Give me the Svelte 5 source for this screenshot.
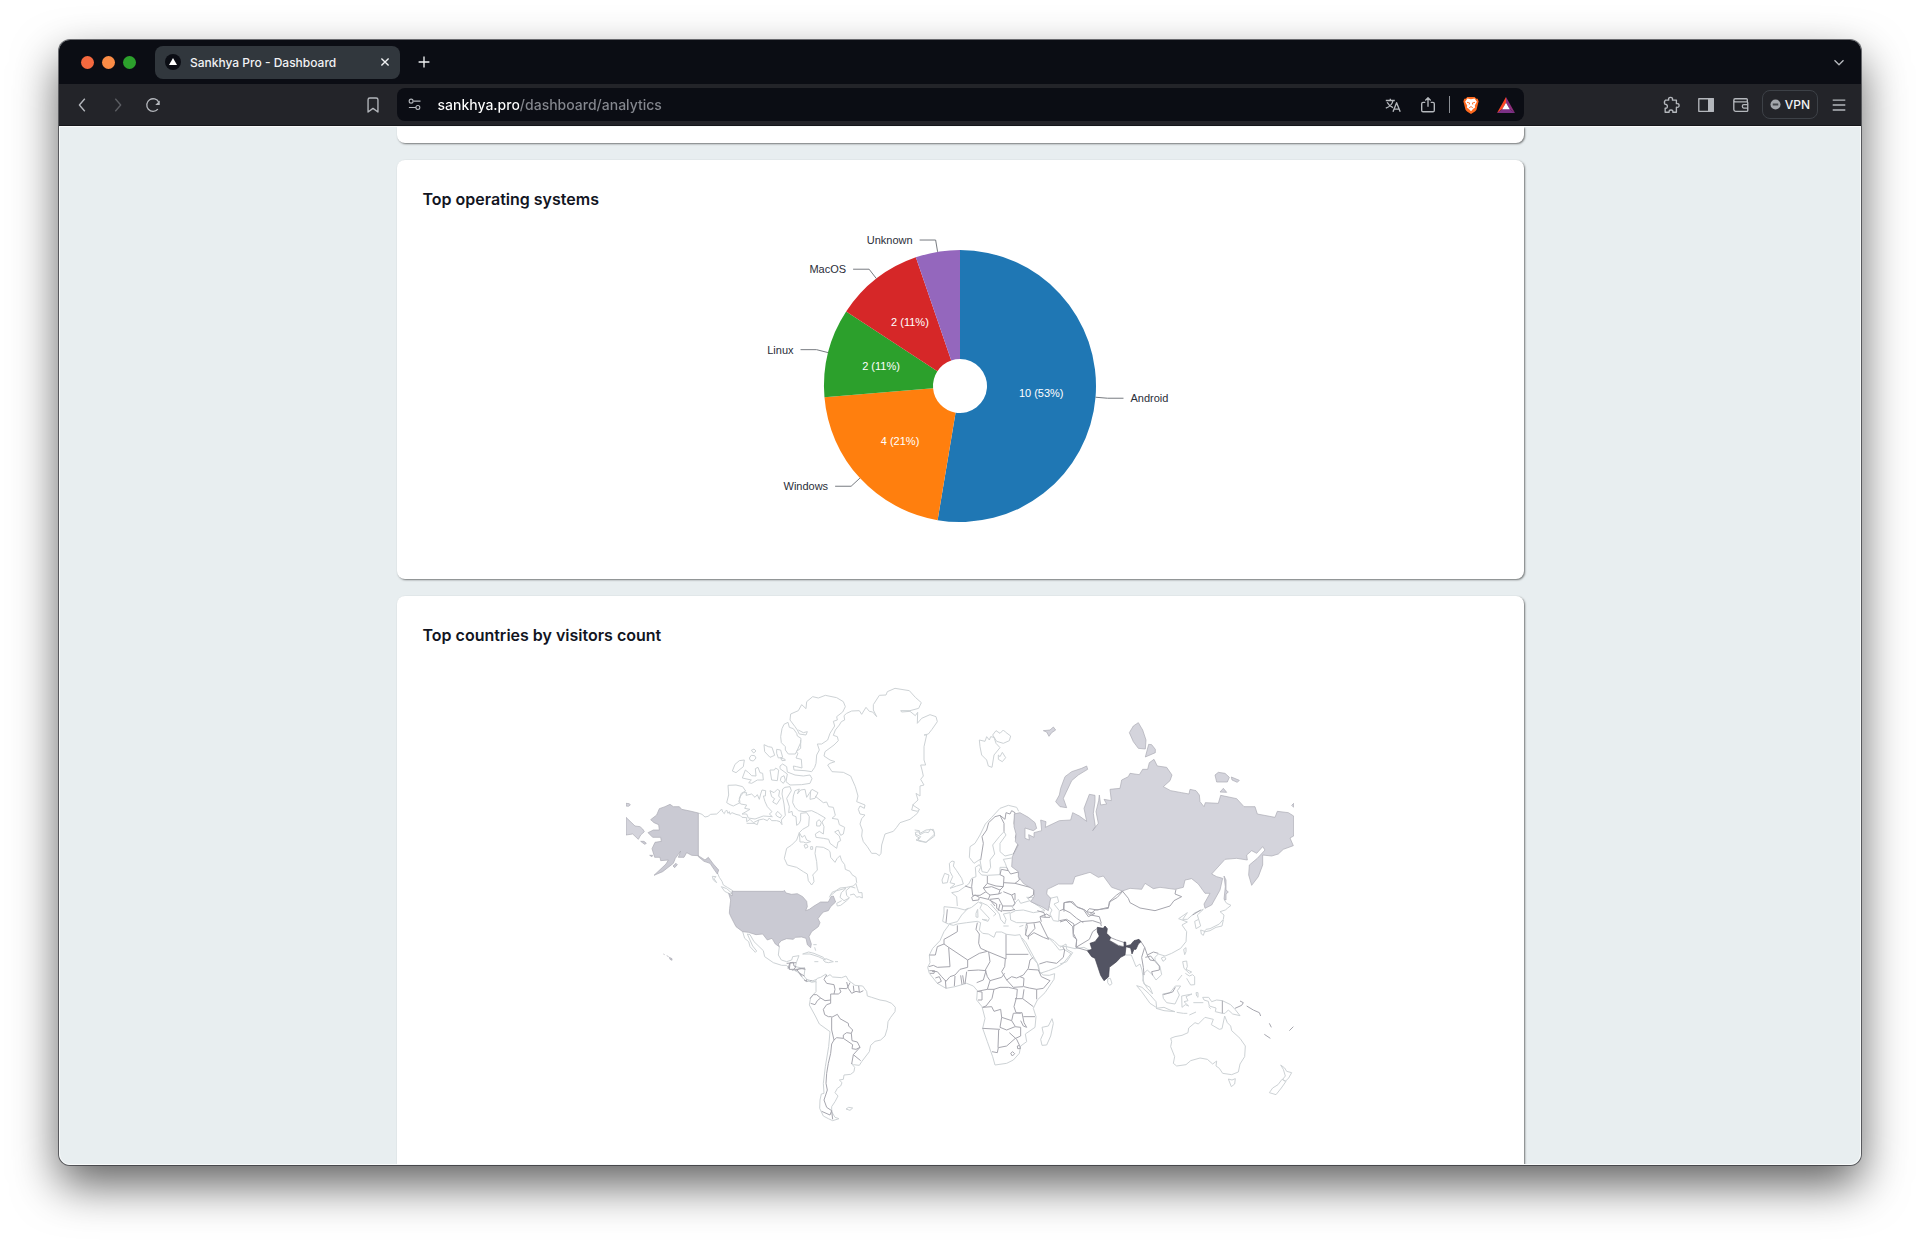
<!--
  Analytics dashboard shown inside a desktop browser window:
  tab strip, toolbar, and the scrolled card column below it.
-->
<script lang="ts">
  type Slice = {
    name: string;
    count: number;
    color: string;
  };

  type Region = {
    name: string;
    /// Offset of the region's own grid on the map sheet.
    x: number;
    y: number;
    coast: string;
    border?: string;
  };

  const OUTER = 136;
  const INNER = 27;

  const systems: Slice[] = [
    { name: "Android", count: 10, color: "#1f77b4" },
    { name: "Windows", count: 4, color: "#ff7f0e" },
    { name: "Linux", count: 2, color: "#2ca02c" },
    { name: "MacOS", count: 2, color: "#d62728" },
    { name: "Unknown", count: 1, color: "#9467bd" },
  ];

  const total = systems.reduce((sum, s) => sum + s.count, 0);

  function polar(radius: number, angle: number): [number, number] {
    return [radius * Math.sin(angle), -radius * Math.cos(angle)];
  }

  // Start angle of each slice is the running total of the ones before it.
  const slices = systems.map((s, i) => {
    const before = systems.slice(0, i).reduce((sum, p) => sum + p.count, 0);
    const a0 = (before / total) * Math.PI * 2;
    const a1 = ((before + s.count) / total) * Math.PI * 2;
    const mid = (a0 + a1) / 2;
    const large = a1 - a0 > Math.PI ? 1 : 0;
    const [x0, y0] = polar(OUTER, a0);
    const [x1, y1] = polar(OUTER, a1);
    const [x2, y2] = polar(INNER, a1);
    const [x3, y3] = polar(INNER, a0);
    const [ex, ey] = polar(OUTER, mid);
    const [kx, ky] = polar(OUTER + 12, mid);
    const [lx, ly] = polar((OUTER + INNER) / 2, mid);
    const side = mid < Math.PI ? 1 : -1;
    return {
      ...s,
      side,
      d: `M${x0} ${y0}A${OUTER} ${OUTER} 0 ${large} 1 ${x1} ${y1}L${x2} ${y2}A${INNER} ${INNER} 0 ${large} 0 ${x3} ${y3}Z`,
      link: `M${ex} ${ey}L${kx} ${ky}h${side * 16}`,
      tx: kx + side * 23,
      ty: ky,
      lx,
      ly,
      // Slices under 6% have no room for a value.
      value:
        s.count / total > 0.06
          ? `${s.count} (${Math.round((s.count / total) * 100)}%)`
          : null,
    };
  });

  const regions: Region[] = [
    {
      name: "Canada and Greenland",
      x: 162,
      y: 0,
      coast:
        "M55 429L66 433 75 441 84 439 92 433 110 432 118 425 125 417 128 426 133 431 136 424 140 420 144 430 148 425 150 433 156 428 168 433 180 436 186 442 200 443 200 455 210 448 220 458 236 450 232 464 222 460 200 460M236 450L250 447 262 452 268 444 275 452 290 452 300 455 306 464 304 450 316 436 312 402 306 372 308 357 315 352 330 350 334 362 320 385 328 410 326 428 336 424 338 436 348 440 350 466 358 460 362 450 362 430 380 428 388 440 386 468 368 478 358 488 350 510 335 525 320 535 313 565 322 585 350 592 370 605 382 612 385 632 395 645 402 635 400 620 398 615 412 600 410 575 405 550 408 530 430 532 445 540 450 545 452 562 465 577 471 566 480 557 485 572 494 584 496 598 510 604 516 614 528 622 530 638 520 648 500 652 480 654 468 662 456 667 448 682M450 678L470 662 498 655 484 668 480 682 492 692 508 684 500 676 498 662 512 650 526 654M528 642L532 655 536 668 546 668 547 684 538 680 530 682 522 672 510 675M508 684L500 692 482 706 472 708 470 700 485 692" +
        "M112 608L118 622 126 634 130 645 142 652 158 662 155 672M124 650L140 656 156 670 150 672 134 664ZM97 619L108 620 102 626 110 638 100 630Z" +
        "M340 378L345 362 358 357 352 372 362 360 375 358 380 382 388 370 396 358 414 368 405 385 390 388 392 362M405 378L430 398 440 396 446 410 460 412 466 436 456 445 474 448 478 464 494 472 490 492 482 496 475 480 464 486 478 498 482 512 474 516 470 535 450 520 446 508 430 505 408 502 406 492 418 484 430 492 432 470 426 456 436 444 412 430 395 422 372 425 355 422 345 412 338 398 340 378" +
        "M410 455L418 449 424 458 420 468 410 468ZM358 488L366 502 374 496 380 510 392 515 378 519 370 516 360 516ZM372 525L380 523 384 531 376 535ZM392 530H398V538H392Z" +
        "M144 346L168 345 188 350 197 363 184 370 178 385 180 398 160 408 150 404 140 398 146 375Z" +
        "M176 395L182 378 190 368 200 368 198 376 215 372 225 382 232 374 238 388 242 372 246 360 257 362 256 378 250 378 255 395 262 410 276 425 268 432 277 440 250 438 225 447 205 444 200 432 186 432 210 418 194 415 200 405 182 402Z" +
        "M270 362L282 368 292 358 299 362 296 378 302 385 290 403 278 396 284 386 275 380ZM287 432L293 424 305 436 301 444 290 438Z" +
        "M157 303L165 283 178 272 193 270 190 290 180 298 168 308ZM196 300L206 308 215 317 228 318 226 296 234 292 240 308 248 310 250 330 232 330 215 340 206 338 214 330 187 324ZM270 300L283 300 287 294 296 300 292 332 275 330ZM303 322L312 317 316 330 310 340 301 332ZM300 288L308 282 320 290 322 306 345 315 370 318 390 315 396 326 390 340 365 344 330 345 318 335 322 312 300 296Z" +
        "M252 224L265 230 276 232 284 256 270 262 254 245ZM290 238L302 240 308 262 295 264 290 250ZM302 265L314 267 316 271 306 272ZM208 264L214 256 224 257 228 264 220 273 211 271ZM214 241L222 237 228 243 221 249Z" +
        "M302 200L306 176 312 163 324 157 328 172 340 176 350 190 352 198 363 205 362 218 352 240 346 252 325 252 316 240 316 230 304 218Z" +
        "M355 180L370 188 382 185 378 195 358 192 352 180 345 170 330 150 332 132 355 122 365 104 378 116 380 95 398 80 415 84 436 76 470 83 490 95 496 110 488 126 470 140 472 150 460 154 464 168 450 190 443 210 425 222 412 222 418 240 410 255 408 280 404 292 395 305 375 302 342 300 340 288 350 290 366 294 364 268 348 264 354 250 348 245 362 235 362 210" +
        "M492 137L500 130 515 123 538 122 545 133 558 112 568 124 578 126 590 140 580 120 580 104 598 76 618 75 622 65 645 55 688 62 706 82 724 98 716 115 690 122 662 122 665 126 690 124 706 137 713 127 712 160 725 145 750 134 768 140 772 155 756 178 745 192 732 195 740 195 732 230 732 270 737 285 722 285 726 300 730 318 722 328 732 345 720 348 720 378 708 370 714 390 698 405 718 418 712 424 695 420 700 402M718 418L712 430 700 440 690 448 660 458 650 472 640 484 615 492 605 525 603 550 598 557 588 550 575 550 562 530 550 515 545 498 547 480 540 462 545 446 555 435 540 432 535 418 540 408 553 415 555 405 530 395 534 378 526 350 512 318 490 307 456 305 443 285 450 280 465 275 450 270 432 258 435 245 462 225 475 212 472 200 460 196 466 180 478 165 484 155 494 150 492 137" +
        "M706 487L716 485 720 494 735 486 745 488 752 477 762 485 764 498 738 517 720 514 708 510 718 504 708 498Z",
    },
    {
      name: "Mexico and the Caribbean",
      x: -48,
      y: 330,
      coast:
        "M398 455L404 475 416 485 420 500 436 517 440 513 428 498 412 462 420 464 432 485 460 512 464 530 490 548 515 556 530 556 538 568 552 570 566 578 576 592 590 605 604 602 620 606M508 500L505 525 514 540 530 545 545 540 548 530 567 527 560 545 556 560 585 566 582 588 590 598 606 603 620 598M578 522L596 516 612 520 640 532 646 540 625 530 600 522ZM640 540L648 536 658 540 670 545 655 548 645 546ZM613 545H625M675 545H684M610 494L620 494M614 502L617 512",
      border:
        "M534 566L540 548 550 547 552 558 558 560 548 572M556 572L568 566 585 564M566 578L583 588M590 598L588 605M604 600L600 606",
    },
    {
      name: "South America",
      x: 462,
      y: 750,
      coast:
        "M82 180L95 187 105 185 112 175 122 172 138 162 140 170 150 164 158 171 185 173 198 168 206 182 215 188 225 196 248 198 260 214 262 228 275 232 300 240 318 243 335 250 346 262 345 275 332 292 324 305 322 325 315 348 302 360 285 364 272 376 268 395 245 425 238 436 220 434 214 430 224 442 222 455 212 463 192 465 190 478 178 480 186 488 182 498 172 505 165 518 174 528 165 545 155 560 155 575 165 592 177 596 158 602 145 596 130 588 119 565 120 540 124 522 132 520 130 490 136 440 146 380 150 335 118 312 106 288 88 255 92 232 108 215 108 185M198 567L206 562 218 564 210 571Z",
      border:
        "M140 165L132 178 140 190 162 194 165 208 162 222 175 222 183 216 178 205 200 206 205 198 210 188M200 186L205 205 215 220 228 214 240 217 250 212M222 215L220 197M238 216L236 198M162 222L152 222 152 250 140 254 130 268 134 284 145 290 155 290M90 236L100 224 110 224 122 234 112 242 105 254 92 250M122 234L135 242 152 240M155 292L172 283 180 296 205 310 206 318 218 330 214 340 200 338 190 345 190 355 170 353 162 360 155 330ZM162 360L155 372 152 400 145 430 140 460 138 490 142 510 132 540 140 562 155 572 158 598M125 574L150 585 155 572M214 340L216 362 232 366 240 382 228 388 216 386 218 374 190 355M240 382L220 404 242 422M220 404L215 432M20 130L48 128M30 130L28 148 50 148 66 146 76 148M50 148L66 170M72 180L82 184",
    },
    {
      name: "Europe, Africa and Arabia",
      x: 822,
      y: 330,
      coast:
        "M148 433L160 436 172 432 200 428 232 424 242 428 238 450 248 460 265 462 282 472 288 456 305 456 320 463 345 466 360 464 366 478 395 530 412 550 418 575 430 585 448 586 464 581 462 598 435 638 412 660 400 685 408 710 405 742 376 762 380 785 362 798 358 820 340 840 320 850 285 855 278 830 262 785 248 745 255 715 246 680 230 660 232 632 220 618 200 610 165 620 138 625 112 610 88 580 83 562 90 548 88 525 98 505 120 482 132 455ZM456 716L460 730 452 768 440 795 426 796 422 778 430 760 426 742 445 738Z" +
        "M366 474L378 488 398 525 415 555 420 580 445 572 470 562 490 550 513 521 492 508 478 510 462 490 444 472 462 482 478 498 500 500 525 506 552 502 570 512" +
        "M450 355L472 350 476 366 462 372 478 392 476 424 460 422 450 402 456 390 444 375ZM340 375L355 358 362 370 390 362 380 352 400 352M390 362L415 378 435 392 400 398 370 390 345 392 336 380M330 400L345 393M330 400L332 420 350 428 380 428 376 445 378 466M310 438H326M358 440L370 436" +
        "M132 380L172 384 195 390 205 384 185 405 172 425 145 432 128 424 132 400ZM195 390L215 382 235 366 246 372 240 385 268 415 264 424 246 418 262 420M240 366L262 376 288 402 280 408M272 372L298 402 302 418 314 432 318 418 310 402 330 398M228 400L233 388 234 412 228 411ZM172 378L170 350 155 338 175 334 192 322 206 312 215 295 228 290 226 262 238 254 242 262 236 275 245 285 262 286 300 284 300 262 320 262 316 250 310 238 335 234" +
        "M148 250L156 243 163 245 160 258 170 272 185 295 190 312 170 318 150 325 165 312 150 308 158 290 150 275ZM126 300L134 280 147 285 142 308 128 310Z" +
        "M210 200L225 190 240 165 256 132 275 112 300 85 325 76 350 82 356 94M210 200L208 232 222 250 240 238M240 240L246 275 262 278 272 262 270 240 284 222 278 195 298 170 312 155 318 165 300 190 300 215 315 228 340 222M44 150L58 152 60 160 78 150 100 148 104 162 78 187 54 180 62 170 46 162",
      border:
        "M242 240L250 190 246 170 260 150 266 128 285 110 300 106 315 118 318 98 330 102 335 92 345 98 342 130 350 160 346 172 355 190 340 222M300 106L312 130 312 155" +
        "M262 288L262 310 250 324 258 335 240 346 218 346 215 320 218 296M262 310L288 318 310 320 312 290 300 284 304 268 325 272 332 282 355 276 358 300 345 310 312 308M325 272L320 262M195 318L214 324M215 352L225 345 238 352 236 360 218 362ZM250 324L275 320 300 330 310 320M300 330L296 342 270 345 258 336M270 345L265 358 240 352M310 335L335 345 345 370 340 378 308 378 296 355 270 358M296 342L305 338M265 358L290 372 290 385 305 395 308 378M272 362L285 378M300 372L295 392M308 392L330 392 345 388M345 310L375 318 402 325 400 345 385 355M335 345L345 340 345 360M142 388L138 428" +
        "M172 436L172 455 150 468 132 478 132 492 112 500 106 525 88 525M132 492L146 502 150 560 112 562 100 556 86 560M146 502L203 540 238 520 262 514 242 505 236 490 238 462 228 448 232 428M262 514L318 537V463M318 523H385M316 537L314 560 305 575 320 600 335 590 350 594 370 585 385 565 390 540 400 532M266 516L270 545 256 570 262 590 270 602 305 592 314 580M203 540L203 562 180 568 165 585 150 590 138 604 125 590 112 575 96 574M203 572L235 570 258 572 250 600 230 608M200 575L195 612M165 588L163 618M182 586L186 614M188 586L192 612M136 600L138 625M88 572L104 572 102 580 90 580M106 594L118 590 124 604 112 610M270 602L262 628 232 634 246 636 246 660 234 660M262 628L282 628 276 655 258 678 248 682M282 628L300 622 325 622 352 628 350 650 342 680 348 698 362 700M320 600L340 622 370 620 372 595 360 590M385 568L415 570 424 590 450 602 430 625 410 628 388 624 372 620M410 628L410 658M372 628L368 656 345 656M368 656L400 680M248 682L275 680 282 694 302 688 305 712 335 722 340 700 366 698 372 728 380 742 370 738 362 722M305 712L300 742 320 750 345 740 362 742 362 768 345 776 320 798 295 803 292 818 276 815M247 745L300 748M296 750L294 803M335 722L345 738M370 710L405 710M328 758L350 778 358 795M332 820L338 815 344 821 337 828ZM352 798L359 796 361 806 353 806Z" +
        "M385 470L402 458 430 472 446 478M385 478L385 470 376 465 382 440 380 432M380 430L405 428 420 425 432 450 446 478M402 430L405 445 384 468M418 552L440 545 470 550 490 532 494 510 488 500M412 392L432 398 436 412 420 410 424 425M420 410L440 402 452 410M436 412L450 412M478 422L500 418 522 432 520 460 530 480 528 502",
    },
    {
      name: "Svalbard and Central Asia",
      x: 1032,
      y: 30,
      coast:
        "M28 180L45 184 50 170 58 180 62 170 72 172 78 190 90 203 72 225 66 262 55 258 50 240 35 225 30 200ZM68 165L78 152 90 160 100 150 106 156 122 168 118 182 100 190 80 184ZM85 225L90 230 97 217 107 233 97 245 85 238Z",
      border:
        "M282 695L282 668 300 664 320 680 345 690 358 705 375 690 415 685 418 665 440 645 457 633 475 655 480 668 510 684 555 692 600 678 612 662 635 650 615 642 618 628",
    },
    {
      name: "Asia and Oceania",
      x: 1302,
      y: 570,
      coast:
        "M143 357L151 355 156 371 149 376 143 368ZM0 262L18 252 20 268 38 278 20 305 0 312M430 148L405 158 382 178 368 178 382 158 356 176 382 186 366 195 380 215 378 245 362 265 335 280 315 288 295 282 285 292M430 148L412 165 416 178 404 184 408 206 422 198 416 178M304 294L313 290 318 297 309 304ZM371 268L378 263 378 275 374 284ZM195 285L214 285 228 320 240 312 246 330 252 372 270 382 278 402 262 385 248 362 252 340 262 330 278 345 288 360 305 344 300 320 285 300 285 292" +
        "M493 120L500 130 513 136 502 145 496 150 480 155 492 165 490 178 478 192 450 206 438 208 432 216 450 212 468 202 486 198 490 180M422 210L434 214 430 226 424 222ZM368 305L380 303 382 320 378 328 395 336 388 340 372 325ZM376 340L388 348 398 344 404 350 404 374 392 375 384 362 380 355M353 362L366 345M308 402L330 398 346 378 362 378 352 392 358 405 345 432 320 428 310 415ZM365 408L396 402 378 410 384 422 372 425 386 438 376 434 366 442ZM408 398L414 398 414 412 410 408ZM400 428H430M230 377L246 382 268 402 288 425 290 443 270 430 245 395ZM288 445L312 442 330 450 345 455 312 452ZM350 457L370 460 382 460M388 465L408 456M428 412L446 412 455 425 470 420 487 422 512 434 525 448 540 467 518 462 505 450 495 460 487 460 466 455 468 444 448 438 445 424 432 420ZM446 440L452 446" +
        "M332 535L345 530 366 526 384 518 386 504 405 488 415 492 435 472 460 478 454 494 478 508 486 506 494 468 502 488 512 498 515 512 540 535 556 558 554 590 540 612 535 636 515 644 488 640 478 625 468 618 470 603 458 612 442 598 420 594 392 602 378 614 350 618 340 610 344 590 332 560 335 545ZM505 657L516 660 526 656 524 672 514 680ZM662 615L674 624 680 634 695 638 686 654 676 664 668 658 676 648 670 628ZM666 658L678 664 664 684 648 704 628 698 638 684 654 674Z",
      border:
        "M243 245L254 262 245 292 250 322 252 345M254 262L262 285 280 276 295 280M256 292L272 288 285 304 298 318 298 330 275 335 278 346M262 285L270 300 282 302M150 232L170 240 194 248M150 242L175 256 192 260M38 200L40 230 50 238 48 262 82 272M38 200L62 185 98 182 122 190 124 198M112 205L98 215 88 238 48 262M10 150L12 128 38 125 52 142 70 148 85 170 105 160 80 155 88 146 112 150 145 142 150 125 172 112 190 92M0 152L10 148 30 158 50 175 70 188M0 186L18 180 38 200M92 165L118 170 124 190M310 404L338 396 346 382M487 422V460M525 445L545 436 550 428 540 423M560 438L580 450 598 458 602 468M628 490L634 502M613 523L631 535M688 512L700 500M398 165L422 150",
    },
  ];

  const unitedStates =
    "M366 334H520L523 331 528 339 545 343 562 341 578 350 590 364 592 380 587 392 598 388 612 378 632 366 655 366 663 350 670 348 677 366 662 380 655 392 640 396 632 405 624 416 630 428 625 440 605 455 597 470 604 492 602 503 592 494 588 475 575 471 556 472 550 478 530 476 514 482 505 492 508 500 496 492 486 475 472 480 458 462 438 464 415 457 398 455 378 440 365 415 358 400 359 385 362 360 356 340 366 348Z" +
    "M265 99L240 93 215 88 208 80 190 80 180 73 165 80 148 86 140 105 122 119 132 128 146 134 148 150 130 150 114 158 128 172 152 172 154 184 135 187 126 206 134 232 150 232 152 242 175 240 168 252 132 286 158 275 190 250 196 235 212 213 205 232 222 232 230 218 245 226 265 227 285 240 295 232 310 252 326 270 322 282 312 268 300 250 282 244 265 230ZM189 258L198 250 202 254 194 263ZM119 226L128 226 126 230ZM92 184L102 184 109 190 104 193ZM160 522L164 524M170 527L176 530M178 532L186 536 186 541 180 538Z";

  const russia =
    "M133 402L150 398 175 412 195 428 200 445 190 452 165 444 165 475 178 480 176 464 192 472 192 458 215 452 212 420 228 425 226 442 268 422 302 420 308 398 328 408 350 424 342 385 358 343 375 346 375 365 370 400 376 440 368 452 385 430 378 395 386 362 388 345 392 375 410 372 402 358 424 362 420 328 450 325 455 300 475 290 480 280 508 284 518 268 533 268 538 248 552 238 562 258 590 262 606 285 600 302 580 320 602 332 635 338 657 342 660 328 678 332 688 345 690 365 702 380 706 368 745 370 752 346 800 356 822 380 855 380 862 402 915 412 922 394 955 398 971 408V468L960 474 970 497 940 508 925 522 905 528 878 525 878 555 865 590 845 616 836 585 838 555 862 535 885 510 878 500 860 520 845 512 830 525 832 540 800 535 765 538 725 582 740 590 758 595 750 630 725 675 705 685 702 672 720 640 705 640 685 612 665 596 645 600 640 622 615 628 570 622 550 626 525 610 515 628 480 625 457 633 425 622 400 588 385 592 360 577 315 590 308 612 265 612 232 628 230 642 242 655 235 692 215 680 182 665 192 650 192 630 160 610 145 590 145 575 125 560 127 530 145 495 136 485 138 462 132 440Z" +
    "M350 258L353 268 325 285 305 302 288 338 280 355 290 383 270 380 257 365 268 345 272 325 285 290 305 275 335 265ZM220 152L240 150 250 141 257 150 245 158 237 169 230 156ZM505 128L518 150 528 180 526 207 505 205 490 185 478 158 490 138ZM536 193L545 194 556 208 556 218 526 231ZM735 285L745 277 765 280 778 292 772 306 740 306ZM784 291L808 301 802 307 786 300ZM750 336L760 325 770 337ZM971 370L965 376 971 382ZM762 588L768 600 768 630 775 636 768 642 768 660 762 658 766 620Z";

  const chukotkaWest =
    "M48 112L75 138 90 140 98 147 103 155 92 165 85 178 68 162 48 165ZM48 70L58 71 61 75 55 79 48 78Z";

  const india =
    "M112 202L130 205 135 198 142 206 140 220 152 232 148 242 175 258 192 262 192 246 197 246 198 258 212 254 222 242 237 238 243 245 235 252 228 268 222 268 216 282 212 264 198 260 195 285 182 292 170 305 148 322 146 350 132 362 122 346 105 295 95 290 82 272 96 268 90 250 105 245 118 228 112 216Z";
</script>

{#snippet windowIcon(path: string)}
  <svg class="icon" viewBox="0 0 20 20" aria-hidden="true"><path d={path} /></svg>
{/snippet}

<div class="desktop">
  <div class="window">
    <header class="tabs">
      <div class="lights">
        <button class="light close" aria-label="Close window"></button>
        <button class="light minimize" aria-label="Minimize window"></button>
        <button class="light maximize" aria-label="Maximize window"></button>
      </div>
      <div class="tab">
        <svg class="favicon" viewBox="0 0 16 16" aria-hidden="true">
          <circle cx="8" cy="8" r="8" fill="#0b0d14" />
          <path d="M8 4l4 7H4z" fill="#fff" />
        </svg>
        <span class="tab-title">Sankhya Pro - Dashboard</span>
        <button class="tab-close" aria-label="Close tab">
          {@render windowIcon("M6 6l8 8M14 6l-8 8")}
        </button>
      </div>
      <button class="tool bright" aria-label="New tab">
        {@render windowIcon("M10 4v12M4 10h12")}
      </button>
      <button class="tool last" aria-label="Search tabs">
        {@render windowIcon("M5 8l5 5 5-5")}
      </button>
    </header>

    <nav class="toolbar" aria-label="Browser">
      <div class="group left">
        <button class="tool" aria-label="Back">
          {@render windowIcon("M12 3l-6 7 6 7")}
        </button>
        <button class="tool" disabled aria-label="Forward">
          {@render windowIcon("M7 3l6 7-6 7")}
        </button>
        <button class="tool" aria-label="Reload">
          <svg class="icon" viewBox="0 0 20 20" aria-hidden="true">
            <path d="M15.4 14.6A7 7 0 1 1 16.4 7" />
            <path d="M17.5 5v5h-5z" fill="currentColor" stroke="none" />
          </svg>
        </button>
        <button class="tool last" aria-label="Bookmark this page">
          {@render windowIcon("M4.500 4.200q0-2 2-2h7q2 0 2 2v13.600l-5.500-4-5.500 4z")}
        </button>
      </div>

      <div class="address">
        <button class="tool" aria-label="Site settings">
          <svg class="icon small" viewBox="0 0 20 20" aria-hidden="true">
            <circle cx="5.500" cy="5.500" r="2.600" />
            <circle cx="14.500" cy="14" r="2.600" />
            <path d="M8.500 5.500H18M2.500 14H12" />
          </svg>
        </button>
        <input class="url" aria-label="Address" value="sankhya.pro/dashboard/analytics" />
        <button class="tool" aria-label="Translate">
          {@render windowIcon("M2 5h10M7 3v2M3.500 7q2 4 6.500 6M10 5q-1 6-8 8.500M10 17.500l4-10 4 10M11.500 14.500h5")}
        </button>
        <button class="tool" aria-label="Share">
          {@render windowIcon("M7 7H4.500Q3 7 3 8.500V16q0 1.500 1.500 1.500h11Q17 17.500 17 16V8.500Q17 7 15.500 7H13M10 12V2M7 5l3-3 3 3")}
        </button>
        <span class="divider"></span>
        <button class="tool" aria-label="Brave Shields">
          <svg class="logo" viewBox="0 0 20 20" aria-hidden="true">
            <path d="M6 1h8l2 2h1.500l1 3-.6 2-1.700 7q-.5 1.300-1.800 2.200L10 20l-4.400-2.800q-1.300-.9-1.800-2.200L2.100 8l-.6-2 1-3H4z" fill="#ff6a1f" />
            <path d="M10 3.500l4-.7 2.500 3.700-2.300 4 .4 2.300-2.100 1.400L10 17l-2.500-2.800-2.100-1.400.4-2.300-2.300-4L6 2.800z" fill="#fff" />
            <path d="M5.500 7l3 .8-.5 1.700M14.500 7l-3 .8.5 1.700M8 13l2-1.200 2 1.200" fill="none" stroke="#ff6a1f" />
          </svg>
        </button>
        <button class="tool" aria-label="Brave Rewards">
          <svg class="logo" viewBox="0 0 20 20" aria-hidden="true">
            <path d="M10 1L0 19l6-4.500 4-7z" fill="#ff4724" />
            <path d="M10 1l10 18-6-4.500-4-7z" fill="#8e2f7c" />
            <path d="M0 19h20l-6-4.500H6z" fill="#7c3186" />
            <path d="M10 7.500l4.200 7.300H5.800z" fill="#fff" />
          </svg>
        </button>
      </div>

      <div class="group right">
        <button class="tool" aria-label="Extensions">
          {@render windowIcon("M4 4.500h3.500Q6.500 1.500 9.500 1.500T11.500 4.500H16V8.500Q19 8 19 10.500T16 12.500V18H12q.5-2.500-2-2.500T8 18H3.500v-4.500Q6 14 6 11.500T3 9q-1-3 1-4.500z")}
        </button>
        <button class="tool" aria-label="Sidebar">
          <svg class="icon" viewBox="0 0 20 20" aria-hidden="true">
            <path d="M2 3h16v14H2z" />
            <path d="M13 3h5v14h-5z" fill="currentColor" />
          </svg>
        </button>
        <button class="tool" aria-label="Wallet">
          {@render windowIcon("M17 6.500V4q0-1-1-1H3.500Q2 3 2 4.700V15q0 2 2 2h12.500q1 0 1-1V7.500q0-1-1-1H4Q2 6.500 2 4.700M17.500 9.500h-4.500q-1.500 0-1.500 2t1.500 2h4.500")}
        </button>
        <button class="vpn">
          <svg viewBox="0 0 12 12" aria-hidden="true">
            <circle cx="6" cy="6" r="5.500" fill="#a3a6ab" />
            <path d="M3 6h6" stroke="#45474c" stroke-width="2" />
          </svg>
          VPN
        </button>
        <button class="tool" aria-label="Menu">
          {@render windowIcon("M3 4.500h14M3 10h14M3 15.500h14")}
        </button>
      </div>
    </nav>

    <main class="page">
      <section class="card scrolled" aria-label="Previous chart"></section>

      <section class="card">
        <h2>Top operating systems</h2>
        <svg class="pie" viewBox="-300 -166 600 335" role="img" aria-label="Top operating systems">
          {#each slices as slice (slice.name)}
            <path d={slice.d} fill={slice.color} />
            <path class="link" d={slice.link} />
            <text
              class="name"
              x={slice.tx}
              y={slice.ty}
              text-anchor={slice.side > 0 ? "start" : "end"}>{slice.name}</text
            >
            {#if slice.value}
              <text class="value" x={slice.lx} y={slice.ly}>{slice.value}</text>
            {/if}
          {/each}
        </svg>
      </section>

      <section class="card">
        <h2>Top countries by visitors count</h2>
        <svg class="map" viewBox="0 -42 2004 1530" role="img" aria-label="Visitors by country">
          {#each regions as region (region.name)}
            <g transform="translate({region.x} {region.y})">
              <path class="coast" d={region.coast} />
              {#if region.border}
                <path class="border" d={region.border} />
              {/if}
            </g>
          {/each}
          <path class="visited low" transform="translate(1032 30)" d={russia} />
          <path class="visited low" transform="translate(-48 330)" d={chukotkaWest} />
          <path class="visited mid" transform="translate(-48 330)" d={unitedStates} />
          <path class="visited high" transform="translate(1302 570)" d={india} />
        </svg>
      </section>
    </main>
  </div>
</div>

<style>
  :global(body) {
    margin: 0;
    background: #fff;
  }

  .desktop {
    display: flex;
    box-sizing: border-box;
    height: 100vh;
    padding: 40px 59px 78px;
    overflow: hidden;
  }
  .window {
    display: flex;
    flex: 1;
    flex-direction: column;
    min-width: 0;
    overflow: hidden;
    border-radius: 11px;
    background: #e8eef0;
    box-shadow:
      0 0 0 1px rgba(40, 42, 48, 0.65),
      0 20px 46px rgba(0, 0, 0, 0.62);
    font-family: Inter, "Liberation Sans", sans-serif;
  }

  button {
    display: flex;
    align-items: center;
    justify-content: center;
    flex: none;
    padding: 0;
    border: 0;
    background: none;
    color: #b4b7bc;
    font: inherit;
    cursor: pointer;
  }

  /* Tab strip */
  .tabs {
    display: flex;
    flex: none;
    align-items: center;
    height: 44px;
    padding: 0 8px 0 22px;
    background: #0b0d14;
  }
  .lights {
    display: flex;
    gap: 8px;
    margin-right: 19px;
  }
  .light {
    width: 13px;
    height: 13px;
    border-radius: 50%;
  }
  .light.close {
    background: #f5693f;
  }
  .light.minimize {
    background: #fb8c46;
  }
  .light.maximize {
    background: #2ca02c;
  }
  .tab {
    display: flex;
    align-items: center;
    box-sizing: border-box;
    width: 245px;
    height: 33px;
    margin-right: 10px;
    padding: 0 5px 0 10px;
    border-radius: 8px;
    background: #31373d;
  }
  .favicon {
    width: 16px;
    height: 16px;
    margin-right: 9px;
  }
  .tab-title {
    flex: 1;
    color: #f1f2f4;
    font-size: 12px;
    font-weight: 500;
    white-space: nowrap;
  }
  .tab-close {
    width: 20px;
    height: 20px;
    color: #f1f2f4;
  }

  /* Toolbar: the address bar lines up with the page column */
  .toolbar {
    display: grid;
    flex: none;
    grid-template-columns: 1fr minmax(0, 1127px) 1fr;
    align-items: center;
    box-sizing: border-box;
    height: 42px;
    border-bottom: 1px solid #15161a;
    background: #232429;
  }
  .group,
  .address {
    display: flex;
    align-items: center;
    gap: 7px;
  }
  .group.left {
    padding: 0 10px;
  }
  .group.right {
    justify-content: flex-end;
    padding-right: 8px;
  }
  .tool {
    width: 28px;
    height: 28px;
  }
  .tool:disabled {
    color: #5b5d62;
  }
  .tool.bright {
    color: #f1f2f4;
  }
  .tool.last {
    margin-left: auto;
  }
  .icon {
    width: 18px;
    height: 18px;
    fill: none;
    stroke: currentColor;
    stroke-width: 1.5;
    stroke-linejoin: round;
  }
  .icon.small {
    width: 15px;
    height: 15px;
  }
  .logo {
    width: 18px;
    height: 18px;
  }
  .address {
    height: 33px;
    padding: 0 4px;
    border-radius: 8px;
    background: #0b0d14;
  }
  /* Host in white, path in grey */
  .url {
    flex: 1;
    min-width: 0;
    padding: 0 0 0 2px;
    border: 0;
    outline: 0;
    background: linear-gradient(to right, #fff 83px, #85888f 83px);
    background-clip: text;
    color: transparent;
    font: inherit;
    font-size: 14px;
    font-weight: 500;
    line-height: 20px;
  }
  .divider {
    width: 1px;
    height: 17px;
    background: #8b8e94;
  }
  .vpn {
    gap: 4px;
    box-sizing: border-box;
    width: 56px;
    height: 29px;
    border: 1px solid #3d4147;
    border-radius: 8px;
    color: #f1f2f4;
    font-size: 12px;
    font-weight: 500;
  }
  .vpn svg {
    width: 11px;
    height: 11px;
  }

  /* Dashboard */
  .page {
    display: flex;
    flex: 1;
    flex-direction: column;
    align-items: center;
    gap: 17px;
    min-height: 0;
    overflow: hidden;
    border: 1px solid #f8fafa;
    border-radius: 0 0 11px 11px;
  }
  .card {
    display: flex;
    flex: none;
    flex-direction: column;
    box-sizing: border-box;
    width: 100%;
    max-width: 1127px;
    padding: 24px 26px;
    border-radius: 8px;
    background: #fff;
    box-shadow: 1px 1px 2px rgba(0, 0, 0, 0.5);
  }
  .card.scrolled {
    height: 16px;
    padding: 0;
    border-radius: 0 0 8px 8px;
  }
  h2 {
    margin: 0 0 6px;
    color: #12151f;
    font-size: 16px;
    font-weight: 600;
    line-height: 30px;
  }
  .pie {
    align-self: center;
    width: 600px;
    max-width: 100%;
  }
  .pie text {
    font-family: "Liberation Sans", Arial, sans-serif;
    font-size: 11px;
    dominant-baseline: central;
  }
  .name {
    fill: #2a2e39;
  }
  .value {
    fill: #fff;
    text-anchor: middle;
  }
  .link {
    fill: none;
    stroke: #777b80;
  }
  .map {
    align-self: center;
    width: 668px;
    max-width: 100%;
  }
  .coast,
  .border {
    fill: none;
    stroke-width: 3;
    stroke-linejoin: round;
  }
  .coast {
    stroke: #cdd2d5;
  }
  .border {
    stroke: #a6a6ae;
  }
  .visited {
    stroke: #a9a9b2;
    stroke-width: 2;
  }
  .visited.low {
    fill: #d4d4dc;
  }
  .visited.mid {
    fill: #cacad3;
  }
  .visited.high {
    fill: #535463;
    stroke: #3f404d;
  }
</style>
